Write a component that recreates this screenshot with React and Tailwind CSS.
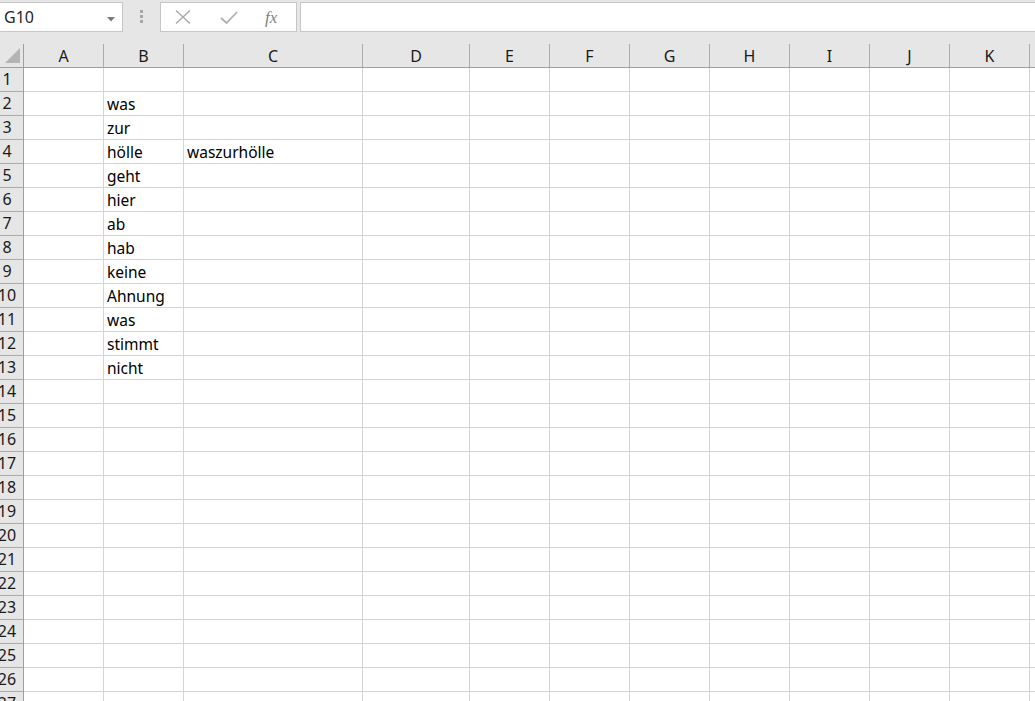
const COLS = ["A", "B", "C", "D", "E", "F", "G", "H", "I", "J", "K", "L"];

const DATA = {
  2: { B: "was" },
  3: { B: "zur" },
  4: { B: "hölle", C: "waszurhölle" },
  5: { B: "geht" },
  6: { B: "hier" },
  7: { B: "ab" },
  8: { B: "hab" },
  9: { B: "keine" },
  10: { B: "Ahnung" },
  11: { B: "was" },
  12: { B: "stimmt" },
  13: { B: "nicht" },
};

const ROWS = Array.from({ length: 27 }, (_, i) => i + 1);

const GRID =
  "grid grid-cols-[24px_80px_80px_179px_107px_80px_80px_80px_80px_80px_80px_80px_80px] grid-rows-[24px]";

function Toolbar() {
  return (
    <div className="relative h-[44px] bg-[#e6e6e6]">
      <div className="flex items-start pt-[2px]">
        {/* Name box */}
        <div className="relative ml-[-1px] flex h-[30px] w-[124px] items-center border border-[#c6c6c6] bg-white pl-[4px] text-[16px] text-[#262626]">
          G10
          <svg className="absolute left-[107px] top-[14px]" width="8" height="5" viewBox="0 0 8 5">
            <polygon points="0,0 8,0 4,4.5" fill="#7a7a7a" />
          </svg>
        </div>

        {/* grip */}
        <div className="ml-[17px] flex flex-col gap-[2px] pt-[8px]">
          <span className="h-[3px] w-[3px] bg-[#a6a6a6]" />
          <span className="h-[3px] w-[3px] bg-[#a6a6a6]" />
          <span className="h-[3px] w-[3px] bg-[#a6a6a6]" />
        </div>

        {/* formula buttons */}
        <div className="ml-[17px] flex h-[30px] w-[137px] items-center border border-[#c6c6c6] bg-white">
          <svg className="ml-[14px]" width="16" height="14" viewBox="0 0 16 14">
            <path d="M1 0.5 L15 13.5 M15 0.5 L1 13.5" stroke="#a6a6a6" strokeWidth="1.3" fill="none" />
          </svg>
          <svg className="ml-[29px]" width="18" height="13" viewBox="0 0 18 13">
            <path d="M1 7 L6.5 12 L17 1" stroke="#b0b0b0" strokeWidth="1.8" fill="none" />
          </svg>
          <span
            className="ml-[27px] text-[17px] italic leading-none text-[#7f7f7f]"
            style={{ fontFamily: '"Liberation Serif", serif' }}
          >
            fx
          </span>
        </div>

        {/* formula input */}
        <div className="ml-[3px] h-[30px] flex-1 border border-r-0 border-[#c6c6c6] bg-white" />
      </div>
    </div>
  );
}

function HeaderRow() {
  return (
    <div className={`${GRID} h-[24px] bg-[#e6e6e6]`}>
      <div className="relative border-r border-b border-[#9f9f9f]">
        <svg className="absolute left-[4px] top-[4px]" width="16" height="16" viewBox="0 0 16 16">
          <polygon points="16,0 16,15 1,15" fill="#b4b4b4" />
        </svg>
      </div>
      {COLS.map((c) => (
        <div
          key={c}
          className="flex items-center justify-center overflow-hidden border-r border-b border-r-[#ababab] border-b-[#9f9f9f] text-[16px] text-[#1a1a1a]"
        >
          {c === "L" ? "" : c}
        </div>
      ))}
    </div>
  );
}

function Row({ n }) {
  const data = DATA[n] || {};
  return (
    <div className={`${GRID} h-[24px]`}>
      <div className="overflow-hidden border-r border-b border-r-[#9f9f9f] border-b-[#ababab] bg-[#e6e6e6]">
        <div className="flex w-[14px] justify-center text-[16px] leading-[23px] text-[#1a1a1a]">
          {n}
        </div>
      </div>
      {COLS.map((c) => (
        <div
          key={c}
          className="h-[24px] whitespace-nowrap border-r border-b border-[#d4d4d4] bg-white pl-[3px] pt-[1px] text-[15.5px] leading-[22px] text-black"
        >
          {data[c] || ""}
        </div>
      ))}
    </div>
  );
}

export default function App() {
  return (
    <div
      className="h-[701px] w-[1035px] overflow-hidden bg-white"
      style={{ fontFamily: '"Noto Sans", "Open Sans", sans-serif' }}
    >
      <Toolbar />
      <HeaderRow />
      {ROWS.map((n) => (
        <Row key={n} n={n} />
      ))}
    </div>
  );
}
